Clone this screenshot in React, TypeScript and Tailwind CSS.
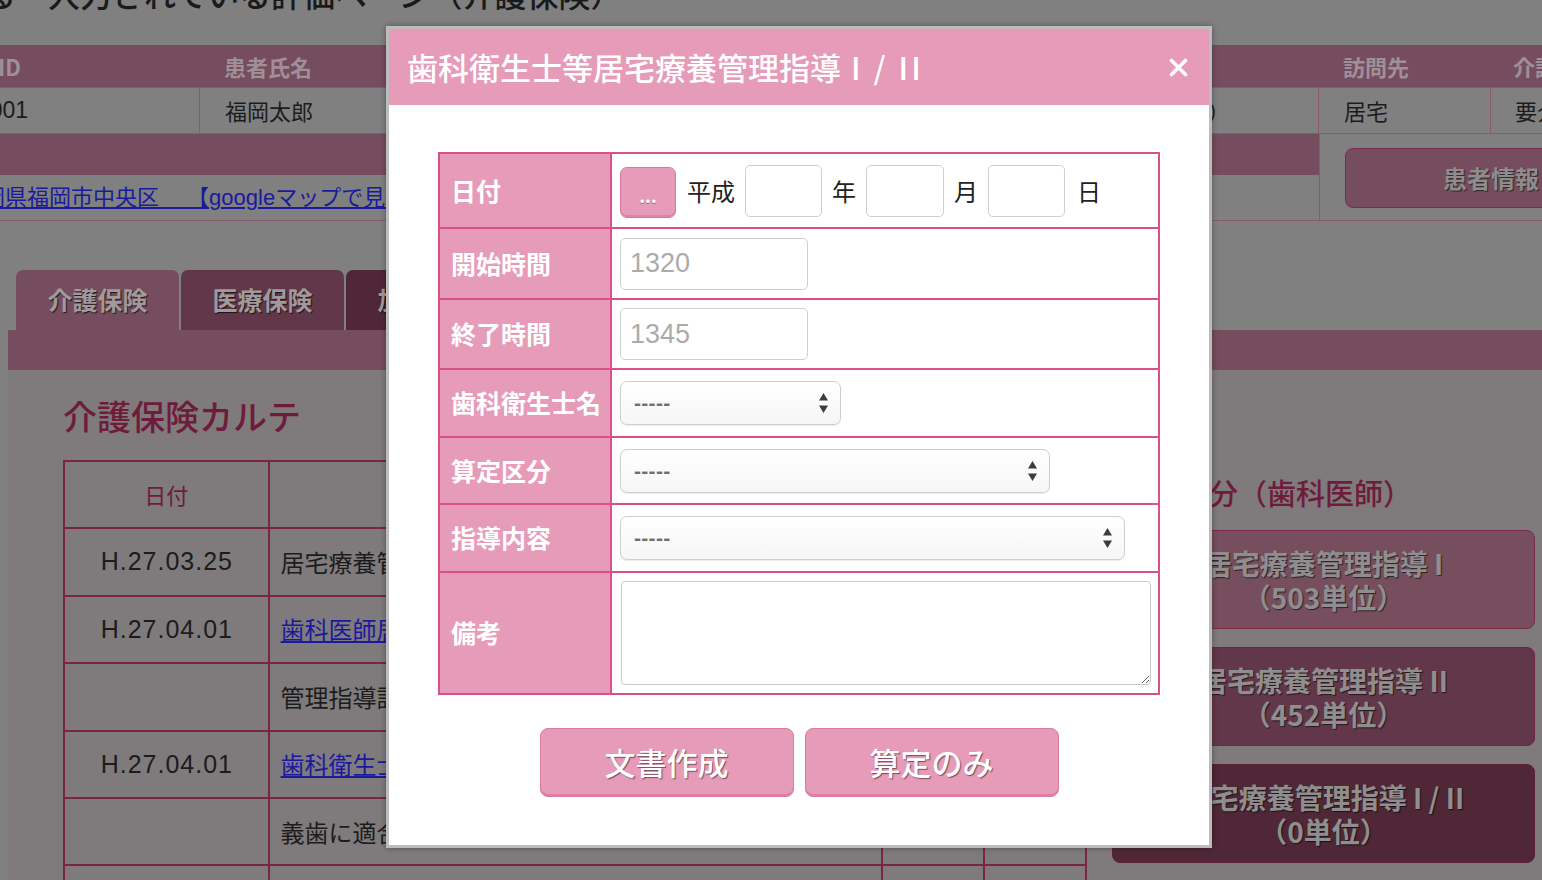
import React from "react";

const SelectArrows = () => (
  <svg width="11" height="22" viewBox="0 0 11 22">
    <path d="M5.5 1 L10 8.5 H1 Z" fill="#3c3c3c" />
    <path d="M5.5 21 L10 13.5 H1 Z" fill="#3c3c3c" />
  </svg>
);

const FakeSelect = ({ w }: { w: string }) => (
  <div
    className={`${w} h-[44px] flex items-center justify-between pl-[13px] pr-[11px] border border-[#cfcfcf] rounded-[7px] bg-gradient-to-b from-white to-[#f6f6f6] shadow-[0_1px_1px_rgba(0,0,0,0.08)]`}
  >
    <span className="text-[21px] font-bold text-[#707070] font-['Liberation_Sans',sans-serif] tracking-[0.3px]">-----</span>
    <SelectArrows />
  </div>
);

const Label = ({ children }: { children: React.ReactNode }) => (
  <div className="w-[172px] shrink-0 bg-[#E69BB8] border-r-2 border-[#d9508a] flex items-center pl-[11px] text-white font-bold text-[25px]">
    {children}
  </div>
);

const cellB = "shrink-0 border-r border-[#8c5a6c] flex items-center";

export default function App() {
  return (
    <div className="relative w-[1542px] h-[880px] overflow-hidden bg-[#808080] font-['Noto_Sans_CJK_JP',sans-serif]">
      {/* page title (cut off) */}
      <div className="h-[45px] overflow-hidden">
        <div className="-mt-[23px] -ml-[16px] text-[32px] leading-[32px] font-medium text-[#1a1a1a] whitespace-nowrap">
          る　入力されている評価ページ（介護保険）
        </div>
      </div>

      {/* patient info table */}
      <div className="-ml-[70px] w-[2000px]">
        <div className="flex h-[42px] bg-[#764D5E] text-[22px] font-bold text-[#9f9097]">
          <div className="w-[270px] shrink-0 pl-[24px] flex items-center">患者ID</div>
          <div className="w-[320px] shrink-0 pl-[24px] flex items-center">患者氏名</div>
          <div className="w-[799px] shrink-0 pl-[24px] flex items-center">生年月日</div>
          <div className="w-[172px] shrink-0 pl-[24px] flex items-center">訪問先</div>
          <div className="w-[300px] shrink-0 pl-[22px] flex items-center">介護度</div>
        </div>
        <div className="flex h-[46px] border-t border-[#8c5a6c] text-[22px] text-[#1c1c1c]">
          <div className={`w-[270px] pl-[47px] ${cellB} font-['Liberation_Sans',sans-serif] text-[23px]`}>0001</div>
          <div className={`w-[320px] pl-[25px] ${cellB}`}>福岡太郎</div>
          <div className={`w-[799px] pr-[88px] justify-end ${cellB}`}>昭和5年1月1日（85歳）</div>
          <div className={`w-[172px] pl-[25px] ${cellB}`}>居宅</div>
          <div className="w-[300px] shrink-0 pl-[24px] flex items-center">要介護2</div>
        </div>
        <div className="flex border-t border-b border-[#8c5a6c]">
          <div className="w-[1389px] shrink-0">
            <div className="h-[41px] bg-[#764D5E] pl-[24px] flex items-center text-[22px] font-bold text-[#9f9097]">住所</div>
            <div className="h-[45px] pl-[31px] flex items-center text-[22px] text-[#1a1a9e] underline whitespace-nowrap font-['Liberation_Sans','Noto_Sans_CJK_JP',sans-serif]">
              福岡県福岡市中央区　 【googleマップで見る】
            </div>
          </div>
          <div className="w-[472px] shrink-0 border-l border-[#8c5a6c] pl-[25px] pt-[14px]">
            <div className="w-[292px] h-[60px] rounded-[8px] bg-[#764D5E] border border-[#7e2a4b] flex items-center justify-center text-[24px] font-bold text-[#8d8d8d] [text-shadow:1px_1px_1px_rgba(0,0,0,0.55)]">
              患者情報
            </div>
          </div>
        </div>
      </div>

      {/* tabs */}
      <div className="mt-[49px] flex gap-[2px] pl-[16px]">
        <div className="w-[163px] h-[60px] rounded-t-[7px] bg-[#764D5E] flex items-center justify-center text-[25px] font-bold text-[#a09a9c] [text-shadow:1px_1px_1px_rgba(0,0,0,0.7)]">
          介護保険
        </div>
        <div className="w-[163px] h-[60px] rounded-t-[7px] bg-[#63374A] flex items-center justify-center text-[25px] font-bold text-[#a09a9c] [text-shadow:1px_1px_1px_rgba(0,0,0,0.7)]">
          医療保険
        </div>
        <div className="w-[163px] h-[60px] rounded-t-[7px] bg-[#4F2736] flex items-center justify-center text-[25px] font-bold text-[#a09a9c] [text-shadow:1px_1px_1px_rgba(0,0,0,0.7)]">
          加算一覧
        </div>
      </div>

      {/* panel */}
      <div className="ml-[8px]">
        <div className="h-[40px] bg-[#764D5E]" />
        <div className="h-[520px] bg-[#7f7a7c] flex">
          {/* left column */}
          <div className="pl-[55px] w-[1079px] shrink-0">
            <div className="h-[90px] flex items-center text-[34px] font-medium text-[#6e1c3a]">介護保険カルテ</div>
            <div className="w-[1024px] border-l-2 border-t-2 border-[#7b2546] text-[24px] text-[#1c1c1c]">
              {[
                { d: "", c: "", head: true },
                { d: "H.27.03.25", c: "居宅療養管理指導（歯科医師）", link: false },
                { d: "H.27.04.01", c: "歯科医師居宅療養管理指導", link: true },
                { d: "", c: "管理指導計画書", link: false },
                { d: "H.27.04.01", c: "歯科衛生士等居宅療養管理指導", link: true },
                { d: "", c: "義歯に適合した指導", link: false },
                { d: "", c: "", link: false },
              ].map((r, i) => (
                <div key={i} className="flex h-[67.4px] border-b-2 border-[#7b2546]">
                  <div className="w-[205px] border-r-2 border-[#7b2546] flex items-center justify-center">
                    {r.head ? (
                      <span className="text-[22px] text-[#6e1c3a]">日付</span>
                    ) : (
                      <span className="font-['Liberation_Sans',sans-serif] text-[25px] tracking-[1px] pl-[1px]">{r.d}</span>
                    )}
                  </div>
                  <div className="w-[615px] border-r-2 border-[#7b2546] flex items-center pl-[11px]">
                    {r.link ? <span className="text-[#1a1a9e] underline">{r.c}</span> : r.c}
                  </div>
                  <div className="w-[102px] border-r-2 border-[#7b2546]" />
                  <div className="w-[102px] border-r-2 border-[#7b2546]" />
                </div>
              ))}
            </div>
          </div>
          {/* right column */}
          <div className="ml-[25px] w-[423px] shrink-0">
            <div className="mt-[102px] h-[40px] leading-[40px] pl-[10px] text-[29px] font-medium text-[#6e1c3a] whitespace-nowrap">
              算定区分（歯科医師）
            </div>
            <div className="mt-[18px] flex flex-col gap-[18px]">
              <div className="h-[99px] rounded-[8px] bg-[#764E5E] border border-[#7e2a4b] flex flex-col items-center justify-center text-[28px] leading-[34px] font-bold text-[#8e8e8e] [text-shadow:1px_1px_1px_rgba(0,0,0,0.6)]">
                <span>居宅療養管理指導 I</span>
                <span>（503単位）</span>
              </div>
              <div className="h-[99px] rounded-[8px] bg-[#63374A] border border-[#6e2442] flex flex-col items-center justify-center text-[28px] leading-[34px] font-bold text-[#8e8e8e] [text-shadow:1px_1px_1px_rgba(0,0,0,0.6)]">
                <span>居宅療養管理指導 II</span>
                <span>（452単位）</span>
              </div>
              <div className="h-[99px] rounded-[8px] bg-[#4F2736] border border-[#5e2038] flex flex-col items-center justify-center text-[28px] leading-[34px] font-bold text-[#8e8e8e] [text-shadow:1px_1px_1px_rgba(0,0,0,0.6)]">
                <span>居宅療養管理指導 I / II</span>
                <span>（0単位）</span>
              </div>
            </div>
          </div>
        </div>
      </div>

      {/* modal */}
      <div className="absolute left-[386px] top-[26px] w-[826px] border-[3px] border-[#bcbcbc] bg-white shadow-[0_0_6px_rgba(0,0,0,0.35)]">
        <div className="h-[76px] bg-[#E69BB8] flex items-center justify-between pl-[18px] pr-[21px]">
          <span className="text-[31px] font-medium text-white whitespace-nowrap">
            歯科衛生士等居宅療養管理指導<span className="ml-[10px] tracking-[3px]">I / II</span>
          </span>
          <svg width="19" height="19" viewBox="0 0 19 19">
            <path d="M2.5 2.5 L16.5 16.5 M16.5 2.5 L2.5 16.5" stroke="white" strokeWidth="3.6" strokeLinecap="round" />
          </svg>
        </div>
        <div className="pt-[47px] pb-[48px]">
          <div className="w-[722px] mx-auto border-2 border-[#d9508a]">
            {/* 日付 */}
            <div className="flex h-[73px]">
              <Label>日付</Label>
              <div className="flex items-center pl-[8px] gap-[10px] text-[24px] text-[#222]">
                <div className="w-[56px] h-[51px] mt-[4px] rounded-[7px] bg-[#E69BB8] border border-[#d97aa0] shadow-[inset_0_-2px_0_rgba(200,90,130,0.35)] flex items-end justify-center pb-[13px] text-white text-[18px] font-bold leading-none [text-shadow:0_1px_1px_rgba(0,0,0,0.35)]">
                  ...
                </div>
                <span className="ml-[1px]">平成</span>
                <input className="w-[77px] h-[52px] border border-[#cfcfcf] rounded-[5px] outline-none" />
                <span>年</span>
                <input className="w-[78px] h-[52px] border border-[#cfcfcf] rounded-[5px] outline-none" />
                <span>月</span>
                <input className="w-[77px] h-[52px] border border-[#cfcfcf] rounded-[5px] outline-none" />
                <span className="ml-[2px]">日</span>
              </div>
            </div>
            {/* 開始時間 */}
            <div className="flex h-[71px] border-t-2 border-[#d9508a]">
              <Label>開始時間</Label>
              <div className="flex items-center pl-[8px]">
                <input
                  placeholder="1320"
                  className="w-[188px] h-[52px] border border-[#cfcfcf] rounded-[5px] pl-[9px] text-[27px] outline-none placeholder:text-[#ababab] font-['Liberation_Sans',sans-serif]"
                />
              </div>
            </div>
            {/* 終了時間 */}
            <div className="flex h-[70px] border-t-2 border-[#d9508a]">
              <Label>終了時間</Label>
              <div className="flex items-center pl-[8px]">
                <input
                  placeholder="1345"
                  className="w-[188px] h-[52px] border border-[#cfcfcf] rounded-[5px] pl-[9px] text-[27px] outline-none placeholder:text-[#ababab] font-['Liberation_Sans',sans-serif]"
                />
              </div>
            </div>
            {/* 歯科衛生士名 */}
            <div className="flex h-[68px] border-t-2 border-[#d9508a]">
              <Label>歯科衛生士名</Label>
              <div className="flex items-center pl-[8px]">
                <FakeSelect w="w-[221px]" />
              </div>
            </div>
            {/* 算定区分 */}
            <div className="flex h-[67px] border-t-2 border-[#d9508a]">
              <Label>算定区分</Label>
              <div className="flex items-center pl-[8px]">
                <FakeSelect w="w-[430px]" />
              </div>
            </div>
            {/* 指導内容 */}
            <div className="flex h-[68px] border-t-2 border-[#d9508a]">
              <Label>指導内容</Label>
              <div className="flex items-center pl-[8px]">
                <FakeSelect w="w-[505px]" />
              </div>
            </div>
            {/* 備考 */}
            <div className="flex h-[122px] border-t-2 border-[#d9508a]">
              <Label>備考</Label>
              <div className="flex items-center pl-[9px]">
                <textarea className="w-[530px] h-[104px] border border-[#c9c9c9] rounded-[4px] outline-none" />
              </div>
            </div>
          </div>
          <div className="mt-[33px] flex justify-center gap-[11px]">
            <div className="w-[254px] h-[69px] rounded-[8px] bg-[#E69BB8] border border-[#da7ba1] shadow-[inset_0_-2px_0_rgba(210,100,140,0.5)] flex items-center justify-center text-[31px] text-white font-medium [text-shadow:1px_1px_1px_rgba(0,0,0,0.5)]">
              文書作成
            </div>
            <div className="w-[254px] h-[69px] rounded-[8px] bg-[#E69BB8] border border-[#da7ba1] shadow-[inset_0_-2px_0_rgba(210,100,140,0.5)] flex items-center justify-center text-[31px] text-white font-medium [text-shadow:1px_1px_1px_rgba(0,0,0,0.5)]">
              算定のみ
            </div>
          </div>
        </div>
      </div>
    </div>
  );
}
